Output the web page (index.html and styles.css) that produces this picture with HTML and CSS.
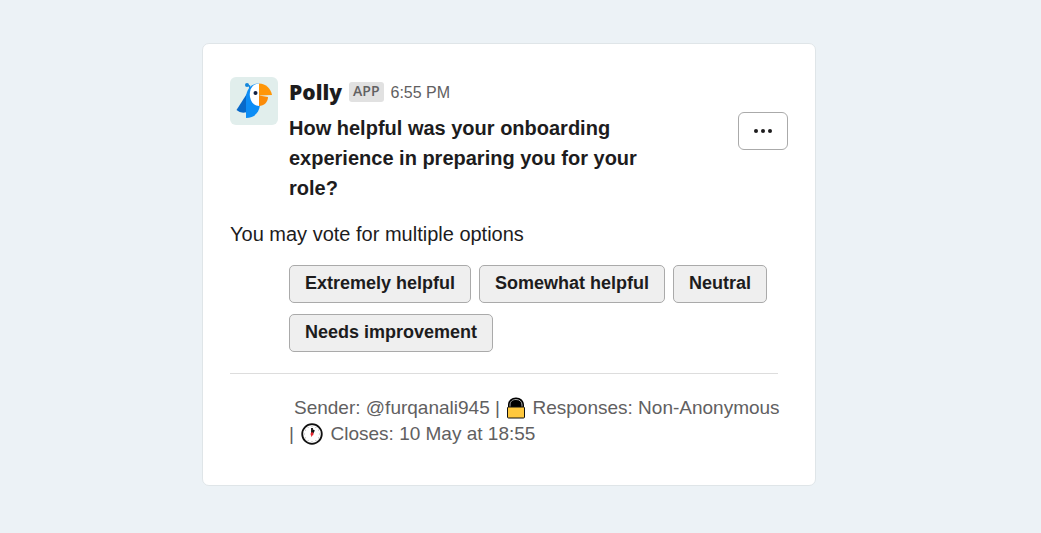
FILE: index.html
```html
<!DOCTYPE html>
<html lang="en">
<head>
<meta charset="utf-8">
<meta name="viewport" content="width=device-width, initial-scale=1">
<title>Polly</title>
<link rel="stylesheet" href="styles.css">
</head>
<body class="page">
<main class="card">
  <article class="message">
    <svg class="avatar" viewBox="0 0 48 48" aria-hidden="true">
      <rect width="48" height="48" rx="6" fill="#e1eeec"/>
      <circle cx="17" cy="8" r="2" fill="#1687dc"/>
      <path d="M17 8 19.500 9 20 12" fill="none" stroke="#1687dc" stroke-width="1.500"/>
      <path d="M18 15 6.500 33Q11 37 17 35Z" fill="#0869c9"/>
      <path d="M29 6.500C21 6 16 13 16 21V41C24 41 29 36 30 28Z" fill="#0d8df5"/>
      <path d="M29 6.500C22 7 19 13 20 20 21 26 25 29 29 29Z" fill="#fff"/>
      <path d="M29 6.500C36 6.500 41 12 42 18L29 18.500Z" fill="#ff9608"/>
      <path d="M29 18.500 38 20C38 25 34 29 29 29Z" fill="#fb8b08"/>
      <circle cx="25.500" cy="16" r="2" fill="#132243"/>
    </svg>
    <div class="content">
      <header class="byline">
        <strong class="name">Polly</strong>
        <span class="badge">APP</span>
        <time class="time">6:55 PM</time>
      </header>
      <div class="question-row">
        <h1 class="question">How helpful was your onboarding experience in preparing you for your role?</h1>
        <button class="more" type="button" aria-label="More actions">
          <svg class="dots" viewBox="0 0 18 4" aria-hidden="true"><circle cx="2" cy="2" r="2"/><circle cx="9" cy="2" r="2"/><circle cx="16" cy="2" r="2"/></svg>
        </button>
      </div>
    </div>
  </article>
  <p class="hint">You may vote for multiple options</p>
  <div class="options">
    <button class="option" type="button">Extremely helpful</button>
    <button class="option" type="button">Somewhat helpful</button>
    <button class="option" type="button">Neutral</button>
    <button class="option" type="button">Needs improvement</button>
  </div>
  <footer class="details">
    <p class="facts">
      <span class="sender">Sender: @furqanali945 |</span>
      <svg class="icon" viewBox="0 0 22 22" role="img" aria-label="Lock"><path d="M3 12V8C3 3.500 6.500 .500 11 .500S19 3.500 19 8V12Z" fill="#000"/><path d="M5 10V8C5 4.500 7.500 2.500 11 2.500S17 4.500 17 8V10" fill="none" stroke="#aaa"/><rect x="2.500" y="10" width="17" height="11" rx="1" fill="#ffc83d" stroke="#111"/></svg>
      <span>Responses: Non-Anonymous</span>
      <span>|</span>
      <svg class="icon clock" viewBox="0 0 22 22" role="img" aria-label="Clock"><circle cx="11" cy="11" r="9.800" fill="#fff" stroke="#111" stroke-width="1.800"/><path d="M11 2.500v1.500M11 18v1.500M2.500 11H4M18 11h1.500M6.500 3.500l1 1.500M15.500 3.500l-1 1.500M3.500 6.500 5 7.500M18.500 6.500 17 7.500M3.500 15.500 5 14.500M18.500 15.500 17 14.500M6.500 18.500l1-1.500M15.500 18.500l-1-1.500" stroke="#bbb"/><path d="M11 11V5" stroke="#111" stroke-width="1.800"/><path d="M11 11 13 7" stroke="#111" stroke-width="1.800"/><path d="M10.500 13.500 11.200 9" stroke="#e8232d"/><circle cx="11" cy="11" r="1.500" fill="#e8232d"/></svg>
      <span>Closes: 10 May at 18:55</span>
    </p>
  </footer>
</main>
</body>
</html>
```
FILE: styles.css
```css
* { box-sizing: border-box; }
.page {
  margin: 0;
  padding: 43px 225px 47px 202px;
  background: #ecf2f6;
  color: #1d1c1d;
  font-family: "Liberation Sans", Arial, sans-serif;
}
.card {
  padding: 33px 27px 38px;
  background: #fff;
  border: 1px solid #dfe5e8;
  border-radius: 7px;
}
.message { display: flex; gap: 11px; }
.avatar { width: 48px; height: 48px; flex: none; }
.content { flex: 1; }
.byline { display: flex; align-items: center; height: 30px; gap: 7px; }
.name { font: 800 21px/28px "Open Sans", sans-serif; }
.badge {
  padding: 0 4px 2px;
  background: #e1e1e1;
  border-radius: 3px;
  color: #616061;
  font: 600 14px/18px "Open Sans", sans-serif;
}
.time { padding-top: 1px; color: #616061; font-size: 16px; }
.question-row { display: flex; justify-content: space-between; align-items: flex-start; }
.question { margin: 6px 0 0; max-width: 370px; font-size: 20px; line-height: 30px; }
.more {
  display: flex;
  align-items: center;
  justify-content: center;
  width: 50px;
  height: 38px;
  flex: none;
  margin: 5px 0 0;
  padding: 0;
  background: #fff;
  border: 1px solid #aaa;
  border-radius: 6px;
}
.dots { width: 18px; height: 4px; fill: #1d1c1d; }
.hint { margin: 16px 0; font-size: 20px; line-height: 30px; }
.options { display: flex; flex-wrap: wrap; gap: 11px 8px; margin-left: 59px; }
.option {
  height: 38px;
  padding: 0 15px 2px;
  background: #efefef;
  border: 1px solid #aaa;
  border-radius: 5px;
  color: #1d1c1d;
  font: bold 18px "Liberation Sans", Arial, sans-serif;
}
.details {
  margin: 21px 10px 0 0;
  padding: 21px 0 0 59px;
  border-top: 1px solid #ddd;
  color: #616061;
  font-size: 19px;
  line-height: 26px;
}
.facts { margin: 0 -5px 0 0; }
.sender { margin-left: 5px; }
.icon { width: 22px; height: 22px; vertical-align: -5px; }
.clock { margin: 0 2px; }
```
